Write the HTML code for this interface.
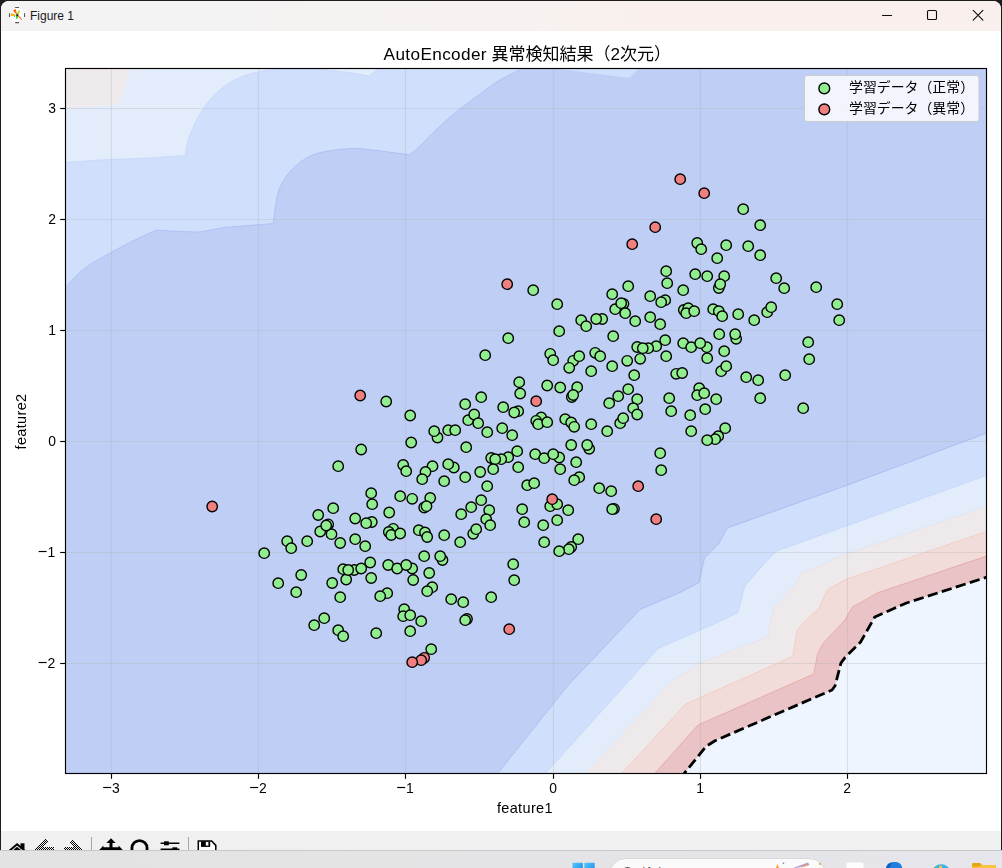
<!DOCTYPE html>
<html lang="ja"><head><meta charset="utf-8"><title>Figure 1</title>
<style>
html,body{margin:0;padding:0;}
body{width:1002px;height:868px;overflow:hidden;position:relative;background:#1d1d1f;font-family:"Liberation Sans","Noto Sans CJK JP",sans-serif;}
.win{position:absolute;left:1px;top:1px;width:1000px;height:867px;background:#fff;border-radius:8px 8px 0 0;overflow:hidden;}
.tbar{position:absolute;left:0;top:0;width:1000px;height:30px;background:linear-gradient(90deg,#f3f3f3 0%,#f3f3f3 20%,#f6f2f0 38%,#f7f2f0 52%,#f9f0ed 64%,#f9f0ed 100%);}
.tbar .name{position:absolute;left:29px;top:7px;font-size:12px;line-height:16px;color:#1a1a1a;}
.tool{position:absolute;left:0;top:830px;width:1000px;height:37px;background:#f0f0f0;}
.task{position:absolute;left:0;top:850px;width:1002px;height:18px;background:linear-gradient(90deg,#e3e3e3 0%,#e4e4e6 50%,#e5e5eb 100%);border-top:1px solid #c8c8ca;box-sizing:border-box;}
.tk{font-size:13.9px;fill:#000;font-family:"Liberation Sans","Noto Sans CJK JP",sans-serif;}
.mn{font-size:16.5px;}
.lb{font-size:14.5px;letter-spacing:0.35px;fill:#000;font-family:"Liberation Sans","Noto Sans CJK JP",sans-serif;}
.tt{font-size:16.6px;fill:#000;font-family:"Liberation Sans","Noto Sans CJK JP",sans-serif;}
.lg{font-size:13.9px;fill:#000;font-family:"Liberation Sans","Noto Sans CJK JP",sans-serif;}
</style></head><body>
<div class="win">
 <div class="tbar"><span class="name">Figure 1</span></div>
 <div class="tool"></div>
</div>
<svg width="1002" height="868" viewBox="0 0 1002 868" style="position:absolute;left:0;top:0;will-change:transform">
<defs><clipPath id="ax"><rect x="65.5" y="68.5" width="921.0" height="705.0"/></clipPath></defs>
<g clip-path="url(#ax)">
<rect x="65.5" y="68.5" width="921.0" height="705.0" fill="#bfcef5"/>
<polygon points="55.0,55.0 523.0,55.0 530.2,64.9 523.0,68.4 520.5,69.6 516.9,71.3 512.8,73.3 508.3,75.5 503.9,77.8 500.0,80.0 496.6,82.1 493.3,84.3 490.1,86.5 486.9,88.9 483.6,91.3 480.0,94.0 476.0,96.9 471.8,100.1 467.4,103.4 463.0,106.7 458.8,109.9 455.0,113.0 451.6,115.8 448.4,118.5 445.5,121.1 442.7,123.7 439.9,126.3 437.0,129.0 434.0,131.9 431.0,134.9 428.0,137.9 425.2,140.9 422.5,143.6 420.0,146.0 417.7,148.0 415.6,149.9 413.6,151.5 411.9,152.8 410.5,153.9 409.4,154.8 378.0,150.6 378.0,150.6 375.0,150.3 371.0,149.8 366.2,149.2 360.9,148.7 355.4,148.4 350.0,148.5 344.5,148.9 338.5,149.5 332.3,150.3 326.2,151.3 320.5,152.6 315.5,154.0 311.1,155.7 307.2,157.6 303.7,159.7 300.5,161.9 297.4,164.4 294.5,167.0 291.7,169.8 289.0,172.8 286.5,176.0 284.3,179.3 282.2,182.6 280.5,186.0 279.1,189.4 278.0,193.0 277.1,196.7 276.5,200.3 275.9,203.7 275.3,207.0 274.8,210.2 274.4,213.5 274.1,216.6 273.8,219.5 273.7,221.8 273.5,223.6 224.6,227.4 200.0,232.0 180.0,231.5 156.5,230.0 154.2,231.1 150.9,232.5 147.1,234.3 143.0,236.2 138.9,238.1 135.0,240.0 131.4,241.8 127.9,243.5 124.4,245.3 120.8,247.2 117.0,249.3 113.0,251.5 108.6,253.9 103.8,256.5 98.8,259.3 93.9,262.1 89.2,265.1 85.0,268.0 81.1,271.2 77.3,274.8 73.8,278.4 70.6,281.8 68.0,284.7 66.0,286.8 60.5,292.6" fill="#d0dffb"/>
<polygon points="552.0,60.0 556.0,68.4 590.0,73.0 621.7,77.0 629.7,77.4 638.7,68.4 646.0,60.0" fill="#d0dffb"/>
<polygon points="55.0,55.0 380.0,55.0 384.1,62.5 378.3,68.0 369.6,76.2 350.4,72.7 322.4,69.5 322.4,69.5 318.5,69.4 313.1,69.3 306.7,69.2 299.9,69.1 293.3,69.1 287.5,69.2 282.4,69.4 277.7,69.6 273.1,69.8 268.6,70.2 264.2,70.8 259.6,71.7 254.9,72.8 250.0,74.1 245.2,75.6 240.4,77.3 235.9,79.2 231.6,81.4 227.6,83.8 223.9,86.6 220.3,89.5 216.9,92.6 213.7,95.8 210.7,99.0 207.9,102.3 205.3,105.7 202.9,109.3 200.7,112.9 198.6,116.5 196.7,120.0 194.9,123.6 193.2,127.2 191.6,130.9 190.2,134.5 189.0,137.9 188.0,141.0 187.2,144.0 186.6,146.9 186.2,149.6 185.9,152.0 185.7,154.0 185.5,155.5 150.0,158.0 100.0,160.0 66.0,162.5 58.0,163.1" fill="#e2ecfb"/>
<polygon points="60.0,60.0 133.0,60.0 131.0,68.4 120.5,101.7 117.8,105.0 60.0,108.2" fill="#eeeaec"/>
<polygon points="993.5,430.6 986.0,433.4 846.7,485.4 790.5,505.4 727.3,528.0 718.5,544.0 704.5,558.0 699.0,582.7 680.0,592.5 640.0,609.5 567.7,685.7 498.8,772.0 493.8,778.3 990.0,780.0" fill="#d0dffb"/>
<polygon points="993.5,472.8 986.0,475.5 846.7,525.8 776.5,551.0 766.0,561.6 744.8,586.0 737.8,612.5 723.0,620.0 700.0,630.0 658.0,648.5 546.7,772.0 541.3,777.9 990.0,780.0" fill="#e2ecfb"/>
<polygon points="993.6,504.4 986.0,507.0 846.7,553.9 801.0,573.9 794.0,586.0 774.7,607.0 771.0,620.0 767.7,637.0 700.0,663.3 672.0,681.0 587.0,772.0 581.5,777.8 990.0,780.0" fill="#eeeaec"/>
<polygon points="993.6,529.1 986.0,531.7 846.7,579.0 827.4,589.7 818.6,609.0 806.0,620.0 797.0,630.4 793.0,656.3 700.0,697.7 685.4,704.3 623.0,772.0 617.6,777.9 990.0,780.0" fill="#f1dcd9"/>
<polygon points="993.6,553.8 986.0,556.3 878.3,592.5 852.0,607.3 845.0,620.0 823.0,643.4 817.7,653.7 813.8,674.0 698.0,725.0 656.0,772.0 650.7,778.0 990.0,780.0" fill="#e9c3c6"/>
<polygon points="993.6,575.0 986.0,577.4 906.4,603.0 874.8,617.0 860.6,642.0 845.0,657.6 841.0,662.8 835.0,686.0 832.0,690.0 715.0,740.7 706.0,746.4 685.4,772.0 680.4,778.2 990.0,780.0" fill="#eff5fe"/>
<polyline points="993.5,430.6 986.0,433.4 846.7,485.4 790.5,505.4 727.3,528.0 718.5,544.0 704.5,558.0 699.0,582.7 680.0,592.5 640.0,609.5 567.7,685.7 498.8,772.0 493.8,778.3" fill="none" stroke="#a6b9f3" stroke-width="0.8"/>
<polyline points="993.5,472.8 986.0,475.5 846.7,525.8 776.5,551.0 766.0,561.6 744.8,586.0 737.8,612.5 723.0,620.0 700.0,630.0 658.0,648.5 546.7,772.0 541.3,777.9" fill="none" stroke="#c3d4f9" stroke-width="0.8"/>
<polyline points="993.6,504.4 986.0,507.0 846.7,553.9 801.0,573.9 794.0,586.0 774.7,607.0 771.0,620.0 767.7,637.0 700.0,663.3 672.0,681.0 587.0,772.0 581.5,777.8" fill="none" stroke="#eadfe4" stroke-width="0.8"/>
<polyline points="993.6,529.1 986.0,531.7 846.7,579.0 827.4,589.7 818.6,609.0 806.0,620.0 797.0,630.4 793.0,656.3 700.0,697.7 685.4,704.3 623.0,772.0 617.6,777.9" fill="none" stroke="#f3c8ba" stroke-width="0.8"/>
<polyline points="993.6,553.8 986.0,556.3 878.3,592.5 852.0,607.3 845.0,620.0 823.0,643.4 817.7,653.7 813.8,674.0 698.0,725.0 656.0,772.0 650.7,778.0" fill="none" stroke="#e6a49b" stroke-width="0.8"/>
<polyline points="60.5,292.6 66.0,286.8 68.0,284.7 70.6,281.8 73.8,278.4 77.3,274.8 81.1,271.2 85.0,268.0 89.2,265.1 93.9,262.1 98.8,259.3 103.8,256.5 108.6,253.9 113.0,251.5 117.0,249.3 120.8,247.2 124.4,245.3 127.9,243.5 131.4,241.8 135.0,240.0 138.9,238.1 143.0,236.2 147.1,234.3 150.9,232.5 154.2,231.1 156.5,230.0 180.0,231.5 200.0,232.0 224.6,227.4 273.5,223.6 273.7,221.8 273.8,219.5 274.1,216.6 274.4,213.5 274.8,210.2 275.3,207.0 275.9,203.7 276.5,200.3 277.1,196.7 278.0,193.0 279.1,189.4 280.5,186.0 282.2,182.6 284.3,179.3 286.5,176.0 289.0,172.8 291.7,169.8 294.5,167.0 297.4,164.4 300.5,161.9 303.7,159.7 307.2,157.6 311.1,155.7 315.5,154.0 320.5,152.6 326.2,151.3 332.3,150.3 338.5,149.5 344.5,148.9 350.0,148.5 355.4,148.4 360.9,148.7 366.2,149.2 371.0,149.8 375.0,150.3 378.0,150.6 378.0,150.6 409.4,154.8 410.5,153.9 411.9,152.8 413.6,151.5 415.6,149.9 417.7,148.0 420.0,146.0 422.5,143.6 425.2,140.9 428.0,137.9 431.0,134.9 434.0,131.9 437.0,129.0 439.9,126.3 442.7,123.7 445.5,121.1 448.4,118.5 451.6,115.8 455.0,113.0 458.8,109.9 463.0,106.7 467.4,103.4 471.8,100.1 476.0,96.9 480.0,94.0 483.6,91.3 486.9,88.9 490.1,86.5 493.3,84.3 496.6,82.1 500.0,80.0 503.9,77.8 508.3,75.5 512.8,73.3 516.9,71.3 520.5,69.6 523.0,68.4 530.2,64.9" fill="none" stroke="#a9bcf4" stroke-width="0.8"/>
<polyline points="58.0,163.1 66.0,162.5 100.0,160.0 150.0,158.0 185.5,155.5 185.7,154.0 185.9,152.0 186.2,149.6 186.6,146.9 187.2,144.0 188.0,141.0 189.0,137.9 190.2,134.5 191.6,130.9 193.2,127.2 194.9,123.6 196.7,120.0 198.6,116.5 200.7,112.9 202.9,109.3 205.3,105.7 207.9,102.3 210.7,99.0 213.7,95.8 216.9,92.6 220.3,89.5 223.9,86.6 227.6,83.8 231.6,81.4 235.9,79.2 240.4,77.3 245.2,75.6 250.0,74.1 254.9,72.8 259.6,71.7 264.2,70.8 268.6,70.2 273.1,69.8 277.7,69.6 282.4,69.4 287.5,69.2 293.3,69.1 299.9,69.1 306.7,69.2 313.1,69.3 318.5,69.4 322.4,69.5 322.4,69.5 350.4,72.7 369.6,76.2 378.3,68.0 384.1,62.5" fill="none" stroke="#c5d6fa" stroke-width="0.8"/>
<line x1="111.5" y1="68.5" x2="111.5" y2="773.5" stroke="#b0b0b0" stroke-opacity="0.3" stroke-width="1.1"/>
<line x1="258.5" y1="68.5" x2="258.5" y2="773.5" stroke="#b0b0b0" stroke-opacity="0.3" stroke-width="1.1"/>
<line x1="405.5" y1="68.5" x2="405.5" y2="773.5" stroke="#b0b0b0" stroke-opacity="0.3" stroke-width="1.1"/>
<line x1="553.5" y1="68.5" x2="553.5" y2="773.5" stroke="#b0b0b0" stroke-opacity="0.3" stroke-width="1.1"/>
<line x1="700.5" y1="68.5" x2="700.5" y2="773.5" stroke="#b0b0b0" stroke-opacity="0.3" stroke-width="1.1"/>
<line x1="847.5" y1="68.5" x2="847.5" y2="773.5" stroke="#b0b0b0" stroke-opacity="0.3" stroke-width="1.1"/>
<line x1="65.5" y1="108.5" x2="986.5" y2="108.5" stroke="#b0b0b0" stroke-opacity="0.3" stroke-width="1.1"/>
<line x1="65.5" y1="219.5" x2="986.5" y2="219.5" stroke="#b0b0b0" stroke-opacity="0.3" stroke-width="1.1"/>
<line x1="65.5" y1="330.5" x2="986.5" y2="330.5" stroke="#b0b0b0" stroke-opacity="0.3" stroke-width="1.1"/>
<line x1="65.5" y1="441.5" x2="986.5" y2="441.5" stroke="#b0b0b0" stroke-opacity="0.3" stroke-width="1.1"/>
<line x1="65.5" y1="552.5" x2="986.5" y2="552.5" stroke="#b0b0b0" stroke-opacity="0.3" stroke-width="1.1"/>
<line x1="65.5" y1="663.5" x2="986.5" y2="663.5" stroke="#b0b0b0" stroke-opacity="0.3" stroke-width="1.1"/>
<polyline points="993.6,575.0 986.0,577.4 906.4,603.0 874.8,617.0 860.6,642.0 845.0,657.6 841.0,662.8 835.0,686.0 832.0,690.0 715.0,740.7 706.0,746.4 685.4,772.0 680.4,778.2" fill="none" stroke="#000" stroke-width="2.8" stroke-dasharray="10.3 4.4" stroke-dashoffset="0" stroke-linejoin="round"/>
<g stroke="#000" stroke-width="1.4" fill="#90ee90">
<circle cx="386.2" cy="401.5" r="5.2"/>
<circle cx="410.2" cy="415.5" r="5.2"/>
<circle cx="437.5" cy="437.5" r="5.2"/>
<circle cx="411.2" cy="442.5" r="5.2"/>
<circle cx="361.2" cy="449.5" r="5.2"/>
<circle cx="338.2" cy="466.2" r="5.2"/>
<circle cx="403.2" cy="465.0" r="5.2"/>
<circle cx="406.2" cy="471.2" r="5.2"/>
<circle cx="432.5" cy="466.2" r="5.2"/>
<circle cx="425.5" cy="472.0" r="5.2"/>
<circle cx="422.2" cy="479.2" r="5.2"/>
<circle cx="371.2" cy="493.2" r="5.2"/>
<circle cx="372.2" cy="504.2" r="5.2"/>
<circle cx="400.2" cy="496.2" r="5.2"/>
<circle cx="412.2" cy="498.8" r="5.2"/>
<circle cx="430.2" cy="498.0" r="5.2"/>
<circle cx="424.2" cy="507.5" r="5.2"/>
<circle cx="426.5" cy="506.2" r="5.2"/>
<circle cx="333.2" cy="508.2" r="5.2"/>
<circle cx="318.2" cy="515.0" r="5.2"/>
<circle cx="389.2" cy="512.5" r="5.2"/>
<circle cx="355.2" cy="518.5" r="5.2"/>
<circle cx="371.8" cy="522.0" r="5.2"/>
<circle cx="366.2" cy="523.2" r="5.2"/>
<circle cx="328.2" cy="524.3" r="5.2"/>
<circle cx="320.2" cy="531.5" r="5.2"/>
<circle cx="331.5" cy="534.2" r="5.2"/>
<circle cx="393.2" cy="528.8" r="5.2"/>
<circle cx="388.8" cy="532.0" r="5.2"/>
<circle cx="391.2" cy="535.0" r="5.2"/>
<circle cx="400.2" cy="533.5" r="5.2"/>
<circle cx="418.8" cy="530.2" r="5.2"/>
<circle cx="425.0" cy="532.5" r="5.2"/>
<circle cx="427.2" cy="537.0" r="5.2"/>
<circle cx="355.2" cy="539.2" r="5.2"/>
<circle cx="340.2" cy="543.0" r="5.2"/>
<circle cx="365.2" cy="546.2" r="5.2"/>
<circle cx="287.2" cy="541.2" r="5.2"/>
<circle cx="291.2" cy="548.2" r="5.2"/>
<circle cx="307.2" cy="541.2" r="5.2"/>
<circle cx="264.2" cy="553.2" r="5.2"/>
<circle cx="424.2" cy="556.2" r="5.2"/>
<circle cx="370.2" cy="562.5" r="5.2"/>
<circle cx="388.2" cy="565.0" r="5.2"/>
<circle cx="397.2" cy="568.5" r="5.2"/>
<circle cx="412.2" cy="568.5" r="5.2"/>
<circle cx="343.2" cy="569.2" r="5.2"/>
<circle cx="354.2" cy="570.0" r="5.2"/>
<circle cx="361.2" cy="568.5" r="5.2"/>
<circle cx="301.2" cy="575.0" r="5.2"/>
<circle cx="346.2" cy="579.5" r="5.2"/>
<circle cx="371.2" cy="578.0" r="5.2"/>
<circle cx="429.2" cy="573.0" r="5.2"/>
<circle cx="413.2" cy="580.0" r="5.2"/>
<circle cx="332.2" cy="583.0" r="5.2"/>
<circle cx="278.2" cy="583.2" r="5.2"/>
<circle cx="591.2" cy="371.2" r="5.2"/>
<circle cx="634.2" cy="375.2" r="5.2"/>
<circle cx="676.2" cy="373.8" r="5.2"/>
<circle cx="519.2" cy="382.2" r="5.2"/>
<circle cx="520.2" cy="393.5" r="5.2"/>
<circle cx="547.2" cy="385.5" r="5.2"/>
<circle cx="560.2" cy="387.5" r="5.2"/>
<circle cx="577.2" cy="387.2" r="5.2"/>
<circle cx="571.8" cy="397.0" r="5.2"/>
<circle cx="573.2" cy="395.0" r="5.2"/>
<circle cx="628.2" cy="389.2" r="5.2"/>
<circle cx="618.2" cy="396.2" r="5.2"/>
<circle cx="609.2" cy="403.2" r="5.2"/>
<circle cx="637.2" cy="399.2" r="5.2"/>
<circle cx="669.2" cy="398.2" r="5.2"/>
<circle cx="671.2" cy="411.2" r="5.2"/>
<circle cx="633.2" cy="408.2" r="5.2"/>
<circle cx="637.2" cy="414.5" r="5.2"/>
<circle cx="620.2" cy="423.2" r="5.2"/>
<circle cx="607.2" cy="431.2" r="5.2"/>
<circle cx="591.2" cy="424.2" r="5.2"/>
<circle cx="481.2" cy="397.2" r="5.2"/>
<circle cx="465.2" cy="404.2" r="5.2"/>
<circle cx="503.2" cy="407.2" r="5.2"/>
<circle cx="518.2" cy="411.2" r="5.2"/>
<circle cx="514.2" cy="412.5" r="5.2"/>
<circle cx="468.2" cy="420.2" r="5.2"/>
<circle cx="541.2" cy="417.5" r="5.2"/>
<circle cx="536.2" cy="420.8" r="5.2"/>
<circle cx="538.2" cy="424.2" r="5.2"/>
<circle cx="547.2" cy="422.2" r="5.2"/>
<circle cx="565.2" cy="419.2" r="5.2"/>
<circle cx="571.2" cy="422.5" r="5.2"/>
<circle cx="574.2" cy="426.8" r="5.2"/>
<circle cx="502.2" cy="428.2" r="5.2"/>
<circle cx="512.2" cy="435.2" r="5.2"/>
<circle cx="487.2" cy="432.2" r="5.2"/>
<circle cx="448.2" cy="430.2" r="5.2"/>
<circle cx="455.2" cy="430.2" r="5.2"/>
<circle cx="466.2" cy="447.2" r="5.2"/>
<circle cx="571.2" cy="445.0" r="5.2"/>
<circle cx="589.2" cy="448.8" r="5.2"/>
<circle cx="587.2" cy="445.0" r="5.2"/>
<circle cx="517.2" cy="451.2" r="5.2"/>
<circle cx="508.2" cy="457.2" r="5.2"/>
<circle cx="501.2" cy="459.2" r="5.2"/>
<circle cx="491.2" cy="458.0" r="5.2"/>
<circle cx="495.2" cy="459.2" r="5.2"/>
<circle cx="535.2" cy="454.2" r="5.2"/>
<circle cx="544.2" cy="458.2" r="5.2"/>
<circle cx="559.2" cy="457.5" r="5.2"/>
<circle cx="553.2" cy="454.2" r="5.2"/>
<circle cx="576.2" cy="462.2" r="5.2"/>
<circle cx="560.2" cy="469.2" r="5.2"/>
<circle cx="518.2" cy="467.2" r="5.2"/>
<circle cx="493.2" cy="469.2" r="5.2"/>
<circle cx="480.2" cy="472.0" r="5.2"/>
<circle cx="465.2" cy="477.2" r="5.2"/>
<circle cx="453.8" cy="467.5" r="5.2"/>
<circle cx="448.2" cy="464.2" r="5.2"/>
<circle cx="444.2" cy="481.2" r="5.2"/>
<circle cx="487.2" cy="486.2" r="5.2"/>
<circle cx="527.2" cy="485.2" r="5.2"/>
<circle cx="534.2" cy="483.2" r="5.2"/>
<circle cx="579.2" cy="477.2" r="5.2"/>
<circle cx="574.2" cy="480.2" r="5.2"/>
<circle cx="599.2" cy="488.2" r="5.2"/>
<circle cx="611.2" cy="491.2" r="5.2"/>
<circle cx="660.2" cy="453.2" r="5.2"/>
<circle cx="661.2" cy="470.2" r="5.2"/>
<circle cx="614.0" cy="508.8" r="5.2"/>
<circle cx="481.2" cy="500.2" r="5.2"/>
<circle cx="471.2" cy="507.2" r="5.2"/>
<circle cx="461.2" cy="514.2" r="5.2"/>
<circle cx="489.2" cy="510.2" r="5.2"/>
<circle cx="486.2" cy="519.2" r="5.2"/>
<circle cx="490.2" cy="525.2" r="5.2"/>
<circle cx="473.2" cy="533.8" r="5.2"/>
<circle cx="476.2" cy="529.2" r="5.2"/>
<circle cx="444.2" cy="535.2" r="5.2"/>
<circle cx="460.2" cy="542.2" r="5.2"/>
<circle cx="522.2" cy="509.2" r="5.2"/>
<circle cx="524.2" cy="522.2" r="5.2"/>
<circle cx="550.2" cy="506.2" r="5.2"/>
<circle cx="557.2" cy="504.2" r="5.2"/>
<circle cx="568.2" cy="510.2" r="5.2"/>
<circle cx="557.2" cy="520.2" r="5.2"/>
<circle cx="543.2" cy="525.2" r="5.2"/>
<circle cx="544.2" cy="542.2" r="5.2"/>
<circle cx="578.2" cy="539.2" r="5.2"/>
<circle cx="571.2" cy="547.0" r="5.2"/>
<circle cx="568.8" cy="549.2" r="5.2"/>
<circle cx="559.2" cy="551.2" r="5.2"/>
<circle cx="442.5" cy="560.0" r="5.2"/>
<circle cx="513.2" cy="564.2" r="5.2"/>
<circle cx="514.2" cy="580.2" r="5.2"/>
<circle cx="682.2" cy="373.0" r="5.2"/>
<circle cx="721.2" cy="371.2" r="5.2"/>
<circle cx="746.2" cy="377.2" r="5.2"/>
<circle cx="758.2" cy="380.2" r="5.2"/>
<circle cx="785.2" cy="375.2" r="5.2"/>
<circle cx="699.2" cy="388.2" r="5.2"/>
<circle cx="697.2" cy="395.2" r="5.2"/>
<circle cx="704.2" cy="393.2" r="5.2"/>
<circle cx="716.2" cy="399.2" r="5.2"/>
<circle cx="760.2" cy="398.2" r="5.2"/>
<circle cx="705.2" cy="409.2" r="5.2"/>
<circle cx="690.2" cy="415.2" r="5.2"/>
<circle cx="803.2" cy="408.2" r="5.2"/>
<circle cx="691.2" cy="431.2" r="5.2"/>
<circle cx="725.2" cy="428.2" r="5.2"/>
<circle cx="718.2" cy="436.2" r="5.2"/>
<circle cx="715.2" cy="439.2" r="5.2"/>
<circle cx="707.2" cy="440.2" r="5.2"/>
<circle cx="533.2" cy="290.2" r="5.2"/>
<circle cx="557.2" cy="304.2" r="5.2"/>
<circle cx="666.2" cy="271.2" r="5.2"/>
<circle cx="667.2" cy="283.2" r="5.2"/>
<circle cx="628.2" cy="286.2" r="5.2"/>
<circle cx="612.2" cy="294.2" r="5.2"/>
<circle cx="650.2" cy="296.2" r="5.2"/>
<circle cx="665.2" cy="300.2" r="5.2"/>
<circle cx="661.2" cy="302.2" r="5.2"/>
<circle cx="623.5" cy="303.8" r="5.2"/>
<circle cx="615.2" cy="309.2" r="5.2"/>
<circle cx="625.2" cy="313.2" r="5.2"/>
<circle cx="650.2" cy="317.2" r="5.2"/>
<circle cx="635.2" cy="321.2" r="5.2"/>
<circle cx="660.2" cy="324.2" r="5.2"/>
<circle cx="581.2" cy="320.2" r="5.2"/>
<circle cx="586.2" cy="326.2" r="5.2"/>
<circle cx="602.2" cy="319.0" r="5.2"/>
<circle cx="596.2" cy="319.0" r="5.2"/>
<circle cx="559.2" cy="331.2" r="5.2"/>
<circle cx="508.2" cy="338.2" r="5.2"/>
<circle cx="613.2" cy="336.2" r="5.2"/>
<circle cx="665.2" cy="340.2" r="5.2"/>
<circle cx="656.2" cy="346.2" r="5.2"/>
<circle cx="648.2" cy="348.2" r="5.2"/>
<circle cx="637.2" cy="347.0" r="5.2"/>
<circle cx="642.8" cy="348.2" r="5.2"/>
<circle cx="485.2" cy="355.2" r="5.2"/>
<circle cx="550.2" cy="353.8" r="5.2"/>
<circle cx="553.2" cy="360.2" r="5.2"/>
<circle cx="573.2" cy="360.8" r="5.2"/>
<circle cx="579.2" cy="356.2" r="5.2"/>
<circle cx="569.2" cy="367.8" r="5.2"/>
<circle cx="595.2" cy="352.8" r="5.2"/>
<circle cx="600.2" cy="356.2" r="5.2"/>
<circle cx="612.2" cy="366.2" r="5.2"/>
<circle cx="627.2" cy="360.8" r="5.2"/>
<circle cx="640.2" cy="358.8" r="5.2"/>
<circle cx="666.2" cy="356.2" r="5.2"/>
<circle cx="743.2" cy="209.2" r="5.2"/>
<circle cx="760.2" cy="225.2" r="5.2"/>
<circle cx="697.2" cy="243.0" r="5.2"/>
<circle cx="701.2" cy="249.2" r="5.2"/>
<circle cx="726.2" cy="245.2" r="5.2"/>
<circle cx="748.2" cy="246.2" r="5.2"/>
<circle cx="760.2" cy="255.2" r="5.2"/>
<circle cx="717.2" cy="258.2" r="5.2"/>
<circle cx="695.2" cy="274.2" r="5.2"/>
<circle cx="707.2" cy="276.2" r="5.2"/>
<circle cx="724.2" cy="276.2" r="5.2"/>
<circle cx="718.8" cy="288.0" r="5.2"/>
<circle cx="720.2" cy="284.2" r="5.2"/>
<circle cx="683.2" cy="290.2" r="5.2"/>
<circle cx="776.2" cy="278.2" r="5.2"/>
<circle cx="784.2" cy="288.2" r="5.2"/>
<circle cx="816.2" cy="287.2" r="5.2"/>
<circle cx="837.2" cy="304.2" r="5.2"/>
<circle cx="839.2" cy="320.2" r="5.2"/>
<circle cx="683.8" cy="310.0" r="5.2"/>
<circle cx="688.2" cy="308.2" r="5.2"/>
<circle cx="686.2" cy="313.2" r="5.2"/>
<circle cx="694.2" cy="311.2" r="5.2"/>
<circle cx="713.2" cy="309.2" r="5.2"/>
<circle cx="718.8" cy="311.2" r="5.2"/>
<circle cx="722.2" cy="316.2" r="5.2"/>
<circle cx="738.2" cy="314.2" r="5.2"/>
<circle cx="754.2" cy="320.2" r="5.2"/>
<circle cx="767.2" cy="312.2" r="5.2"/>
<circle cx="771.2" cy="307.2" r="5.2"/>
<circle cx="719.2" cy="334.2" r="5.2"/>
<circle cx="736.2" cy="338.8" r="5.2"/>
<circle cx="735.2" cy="334.2" r="5.2"/>
<circle cx="683.2" cy="343.2" r="5.2"/>
<circle cx="691.2" cy="347.2" r="5.2"/>
<circle cx="706.8" cy="347.2" r="5.2"/>
<circle cx="700.2" cy="343.2" r="5.2"/>
<circle cx="724.2" cy="351.2" r="5.2"/>
<circle cx="707.2" cy="358.2" r="5.2"/>
<circle cx="808.2" cy="342.2" r="5.2"/>
<circle cx="809.2" cy="359.2" r="5.2"/>
<circle cx="726.2" cy="366.2" r="5.2"/>
<circle cx="432.2" cy="587.2" r="5.2"/>
<circle cx="427.2" cy="591.2" r="5.2"/>
<circle cx="296.2" cy="592.2" r="5.2"/>
<circle cx="340.2" cy="597.2" r="5.2"/>
<circle cx="387.2" cy="593.2" r="5.2"/>
<circle cx="380.2" cy="596.2" r="5.2"/>
<circle cx="451.2" cy="599.2" r="5.2"/>
<circle cx="463.2" cy="602.2" r="5.2"/>
<circle cx="404.2" cy="609.2" r="5.2"/>
<circle cx="403.2" cy="616.2" r="5.2"/>
<circle cx="410.2" cy="615.2" r="5.2"/>
<circle cx="421.2" cy="621.2" r="5.2"/>
<circle cx="467.0" cy="619.0" r="5.2"/>
<circle cx="324.2" cy="618.2" r="5.2"/>
<circle cx="314.2" cy="625.2" r="5.2"/>
<circle cx="338.2" cy="630.2" r="5.2"/>
<circle cx="343.2" cy="636.2" r="5.2"/>
<circle cx="376.2" cy="633.2" r="5.2"/>
<circle cx="410.2" cy="631.2" r="5.2"/>
<circle cx="431.2" cy="649.2" r="5.2"/>
<circle cx="491.2" cy="597.2" r="5.2"/>
<circle cx="348.2" cy="570.0" r="5.2"/>
<circle cx="406.2" cy="565.0" r="5.2"/>
<circle cx="434.2" cy="431.2" r="5.2"/>
<circle cx="474.2" cy="414.5" r="5.2"/>
<circle cx="478.2" cy="423.2" r="5.2"/>
<circle cx="623.2" cy="418.2" r="5.2"/>
<circle cx="440.2" cy="556.2" r="5.2"/>
<circle cx="326.2" cy="525.5" r="5.2"/>
<circle cx="621.2" cy="303.2" r="5.2"/>
<circle cx="465.2" cy="620.2" r="5.2"/>
<circle cx="612.2" cy="509.2" r="5.2"/>
</g><g stroke="#000" stroke-width="1.4" fill="#f08080">
<circle cx="360.2" cy="395.5" r="5.2"/>
<circle cx="212.2" cy="506.5" r="5.2"/>
<circle cx="536.2" cy="401.2" r="5.2"/>
<circle cx="552.2" cy="499.2" r="5.2"/>
<circle cx="638.2" cy="486.2" r="5.2"/>
<circle cx="656.2" cy="519.2" r="5.2"/>
<circle cx="680.2" cy="179.2" r="5.2"/>
<circle cx="655.2" cy="227.2" r="5.2"/>
<circle cx="632.2" cy="244.2" r="5.2"/>
<circle cx="507.2" cy="284.2" r="5.2"/>
<circle cx="704.2" cy="193.2" r="5.2"/>
<circle cx="424.2" cy="657.8" r="5.2"/>
<circle cx="509.2" cy="629.2" r="5.2"/>
<circle cx="421.2" cy="660.2" r="5.2"/>
<circle cx="412.2" cy="662.2" r="5.2"/>
</g>
</g>
<rect x="65.5" y="68.5" width="921.0" height="705.0" fill="none" stroke="#000" stroke-width="1.15"/>
<line x1="111.5" y1="773.5" x2="111.5" y2="778.8" stroke="#000" stroke-width="1.15"/>
<text x="111.0" y="793" text-anchor="middle" class="tk"><tspan class="mn">−</tspan>3</text>
<line x1="258.5" y1="773.5" x2="258.5" y2="778.8" stroke="#000" stroke-width="1.15"/>
<text x="258.0" y="793" text-anchor="middle" class="tk"><tspan class="mn">−</tspan>2</text>
<line x1="405.5" y1="773.5" x2="405.5" y2="778.8" stroke="#000" stroke-width="1.15"/>
<text x="405.0" y="793" text-anchor="middle" class="tk"><tspan class="mn">−</tspan>1</text>
<line x1="553.5" y1="773.5" x2="553.5" y2="778.8" stroke="#000" stroke-width="1.15"/>
<text x="553.0" y="793" text-anchor="middle" class="tk">0</text>
<line x1="700.5" y1="773.5" x2="700.5" y2="778.8" stroke="#000" stroke-width="1.15"/>
<text x="700.0" y="793" text-anchor="middle" class="tk">1</text>
<line x1="847.5" y1="773.5" x2="847.5" y2="778.8" stroke="#000" stroke-width="1.15"/>
<text x="847.0" y="793" text-anchor="middle" class="tk">2</text>
<line x1="60.2" y1="108.5" x2="65.5" y2="108.5" stroke="#000" stroke-width="1.15"/>
<text x="56.0" y="113.4" text-anchor="end" class="tk">3</text>
<line x1="60.2" y1="219.5" x2="65.5" y2="219.5" stroke="#000" stroke-width="1.15"/>
<text x="56.0" y="224.4" text-anchor="end" class="tk">2</text>
<line x1="60.2" y1="330.5" x2="65.5" y2="330.5" stroke="#000" stroke-width="1.15"/>
<text x="56.0" y="335.4" text-anchor="end" class="tk">1</text>
<line x1="60.2" y1="441.5" x2="65.5" y2="441.5" stroke="#000" stroke-width="1.15"/>
<text x="56.0" y="446.4" text-anchor="end" class="tk">0</text>
<line x1="60.2" y1="552.5" x2="65.5" y2="552.5" stroke="#000" stroke-width="1.15"/>
<text x="55.2" y="557.4" text-anchor="end" class="tk"><tspan class="mn">−</tspan>1</text>
<line x1="60.2" y1="663.5" x2="65.5" y2="663.5" stroke="#000" stroke-width="1.15"/>
<text x="55.2" y="668.4" text-anchor="end" class="tk"><tspan class="mn">−</tspan>2</text>
<text x="524.9" y="812.7" text-anchor="middle" class="lb">feature1</text>
<text transform="translate(26.4,421.5) rotate(-90)" text-anchor="middle" class="lb">feature2</text>
<text y="59.7" class="tt"><tspan x="383.6" style="font-size:17.2px;letter-spacing:0.36px">AutoEncoder</tspan><tspan x="491.5" style="font-size:17px">異常検知結果（2次元）</tspan></text>
<rect x="804.5" y="75.5" width="174.5" height="46" rx="2.5" fill="#fff" fill-opacity="0.8" stroke="#ccc" stroke-width="1"/>
<circle cx="824.3" cy="88.4" r="5.4" fill="#90ee90" stroke="#000" stroke-width="1.4"/>
<circle cx="824.3" cy="109.4" r="5.4" fill="#f08080" stroke="#000" stroke-width="1.4"/>
<text x="849" y="91.6" class="lg">学習データ（正常）</text>
<text x="849" y="112.8" class="lg">学習データ（異常）</text>
</svg>
<svg width="1002" height="868" viewBox="0 0 1002 868" style="position:absolute;left:0;top:0">
<g>
<circle cx="17" cy="15.1" r="8.2" fill="#fff"/>
<circle cx="17" cy="15.1" r="7.6" fill="none" stroke="#c8c8c8" stroke-width="0.9" stroke-dasharray="0.9 2.1"/>
<path d="M15.1 7.5H19M15.1 22.6H19M9.5 13.3V16.9M24.5 13.3V16.9" stroke="#555" stroke-width="1.1" fill="none"/>
<path d="M17.4 15.2L12.9 10.6L15.6 8.9Z" fill="#ff5a00"/>
<path d="M17.2 15.3L11 16.2L11 12.9Z" fill="#ffb400"/>
<path d="M17.2 15.2L21.9 19.6" stroke="#ff6a00" stroke-width="1.1"/>
<path d="M17.6 14.6L19.4 10.6" stroke="#9be000" stroke-width="1.5"/>
<path d="M16.9 15.6L16.8 18.6" stroke="#2fc22f" stroke-width="1.6"/>
<circle cx="14.4" cy="16.3" r="0.7" fill="#10c0a0"/>
<circle cx="17.3" cy="15.2" r="1.1" fill="#222"/>
</g>
<g stroke="#0c0c0c" stroke-width="1.1" fill="none" stroke-linecap="round">
<path d="M882.5 15.5H891.5"/>
<rect x="927.5" y="10.5" width="9" height="9" rx="1.3"/>
<path d="M973.2 10.4L982.9 20.1M982.9 10.4L973.2 20.1"/>
</g>
<defs><clipPath id="tb"><rect x="1" y="831" width="1000" height="19"/></clipPath><pattern id="dz" width="2" height="2" patternUnits="userSpaceOnUse"><rect x="0" y="0" width="1" height="1" fill="#000"/><rect x="1" y="1" width="1" height="1" fill="#000"/></pattern></defs>
<g clip-path="url(#tb)">
<path d="M17.1 842.9L7.6 851L10.6 851L17.1 845.4L23.6 851L26.6 851Z" fill="#000"/>
<path d="M17.1 846.7L11.9 851.2L22.3 851.2Z" fill="#000"/>
<rect x="20.5" y="843.3" width="4" height="5.6" fill="#000"/>
<path d="M45.6 839.3L48.6 842.3L43.6 847.3L54.4 847.3L54.4 852L35 852L35 850Z" fill="url(#dz)" shape-rendering="crispEdges"/>
<path d="M72.4 839.3L69.4 842.3L74.4 847.3L63.6 847.3L63.6 852L83 852L83 850Z" fill="url(#dz)" shape-rendering="crispEdges"/>
<path d="M91.5 837V852M188.5 837V852" stroke="#a6a6a6" stroke-width="1"/>
<path d="M111 838.3L115.6 843H112.5V847.2H118.6V845.4L123.2 850.5L118.6 855H103.4L98.8 850.5L103.4 845.4V847.2H109.5V843H106.4Z" fill="#000"/>
<circle cx="139.5" cy="848.2" r="7.6" fill="none" stroke="#000" stroke-width="2.8"/>
<path d="M160.6 843.2H179.4M160.6 849.2H179.4" stroke="#000" stroke-width="1.5"/>
<rect x="164" y="841.3" width="4.8" height="4" fill="#000"/><rect x="172.4" y="847.3" width="4.8" height="4" fill="#000"/>
<path d="M198.3 840.9H211.6L215.8 845.4V856H198.3Z" fill="#fff" stroke="#000" stroke-width="1.5"/>
<rect x="201" y="841.4" width="9.2" height="5.5" fill="#000"/><rect x="205.8" y="842" width="2.6" height="3.6" fill="#fff"/>
</g>
</svg>
<div class="task"></div>
<svg width="1002" height="868" viewBox="0 0 1002 868" style="position:absolute;left:0;top:0">
<defs><linearGradient id="wl" x1="0" y1="0" x2="1" y2="1"><stop offset="0" stop-color="#55c8ff"/><stop offset="1" stop-color="#1488e0"/></linearGradient></defs>
<rect x="572.5" y="862.8" width="10.4" height="10" rx="0.8" fill="url(#wl)"/><rect x="584.3" y="862.8" width="10.4" height="10" rx="0.8" fill="url(#wl)"/>
<rect x="609.5" y="858.5" width="216" height="32" rx="16" fill="#fafafa" stroke="#d9d9dc" stroke-width="1"/>
<path d="M623 871.6A4.6 4.6 0 0 1 632 871.6" fill="none" stroke="#222" stroke-width="1.6"/>
<text x="641" y="877.5" style="font-size:12.5px;fill:#444;font-family:'Liberation Sans','Noto Sans CJK JP',sans-serif">検索</text>
<path d="M793 868L808 862.5L809.5 865L796 868Z" fill="#b79ad0"/><path d="M800 868L807 863.8L808 865.5Z" fill="#e8a060"/>
<circle cx="783.5" cy="863.3" r="0.8" fill="#9060c0"/><circle cx="820" cy="864" r="0.9" fill="#e89020"/><path d="M776 868L777.5 864L779 868Z" fill="#f0a020"/>
<rect x="846.5" y="862.6" width="17.2" height="10" rx="1.5" fill="#fdfdfd"/>
<path d="M886 868C887 863.5 890 862 895 862C899 862 901.5 864 902.2 868Z" fill="#1e7fe0"/><path d="M886 868C887 864.5 889 863 892 862.8L889.5 868Z" fill="#0f5fc0"/>
<path d="M931.9 872.2A9.4 9.4 0 0 1 950.5 872.2Z" fill="#2fb4f2"/><rect x="939" y="865.6" width="3" height="3" rx="0.8" fill="#fbc12d"/><circle cx="935.6" cy="867.6" r="0.9" fill="#58c777"/>
<path d="M972 864.4Q972 863 973.4 863H980.2L982 865H995.8V870H972Z" fill="#e6a50c"/><path d="M972 866.6H979.5L981 865.1H995.8V870H972Z" fill="#f8c440"/>
</svg>
</body></html>
